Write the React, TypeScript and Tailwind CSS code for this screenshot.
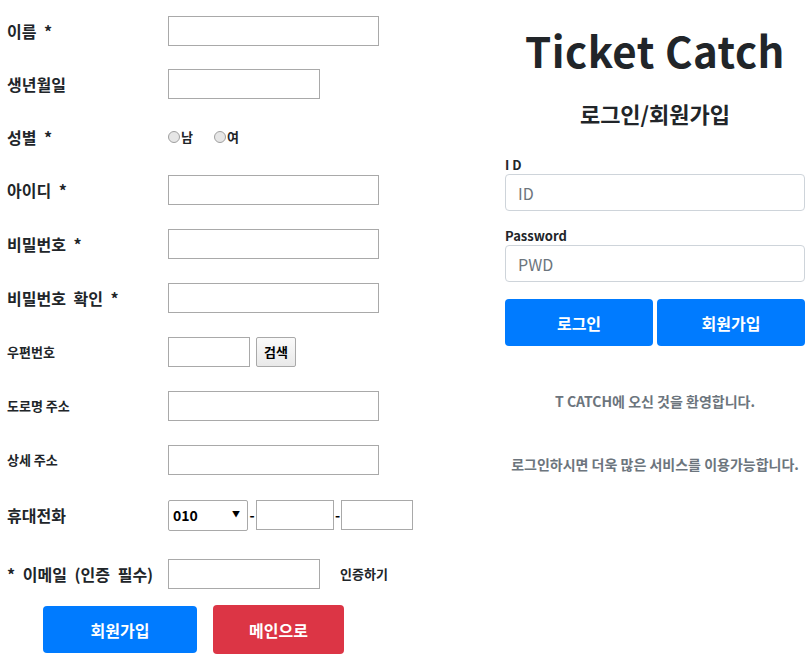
import { useState } from "react";

const font = { fontFamily: '"Noto Sans CJK KR", "Noto Sans", sans-serif' };

type RowProps = {
  label: string;
  h: string;
  small?: boolean;
  children?: React.ReactNode;
};

function Row({ label, h, small, children }: RowProps) {
  return (
    <div className={`flex items-center ${h}`}>
      <div
        className={`w-[168px] shrink-0 pl-[7px] font-bold text-[#212529] ${
          small ? "text-[13px]" : "text-[16px] [word-spacing:4px]"
        }`}
      >
        {label}
      </div>
      {children}
    </div>
  );
}

const boxInput = "h-[30px] border border-[#a9a9a9] bg-white px-1 text-[14px] outline-none";

function Radio({ label, name, value, checked, onChange }: { label: string; name: string; value: string; checked: boolean; onChange: (v: string) => void }) {
  return (
    <label className="flex items-center text-[13px] font-bold text-[#212529]">
      <input
        type="radio"
        name={name}
        value={value}
        checked={checked}
        onChange={() => onChange(value)}
        className="mr-[1px] h-[12px] w-[12px] appearance-none rounded-full border border-[#a0a0a0] bg-[#e6e6e6] checked:bg-[#007bff]"
      />
      {label}
    </label>
  );
}

export default function App() {
  const [gender, setGender] = useState("");
  const [phone1, setPhone1] = useState("010");

  return (
    <div className="flex h-[657px] w-[810px] bg-white" style={font}>
      {/* sign up form */}
      <div className="w-[505px] shrink-0 pt-[4px]">
        <Row label="이름 *" h="h-[54px]">
          <input className={`${boxInput} w-[211px]`} />
        </Row>
        <Row label="생년월일" h="h-[52px]">
          <input className={`${boxInput} w-[152px]`} />
        </Row>
        <Row label="성별 *" h="h-[53px]">
          <div className="flex gap-[21px]">
            <Radio label="남" name="gender" value="m" checked={gender === "m"} onChange={setGender} />
            <Radio label="여" name="gender" value="f" checked={gender === "f"} onChange={setGender} />
          </div>
        </Row>
        <Row label="아이디 *" h="h-[54px]">
          <input className={`${boxInput} w-[211px]`} />
        </Row>
        <Row label="비밀번호 *" h="h-[53px]">
          <input type="password" className={`${boxInput} w-[211px]`} />
        </Row>
        <Row label="비밀번호 확인 *" h="h-[55px]">
          <input type="password" className={`${boxInput} w-[211px]`} />
        </Row>
        <Row label="우편번호" h="h-[54px]" small>
          <input className={`${boxInput} w-[82px]`} />
          <button className="ml-[6px] h-[30px] w-[40px] rounded-[2px] border border-[#a9a9a9] bg-gradient-to-b from-[#fafafa] to-[#e9e9e9] text-[13px] font-bold text-black">
            검색
          </button>
        </Row>
        <Row label="도로명 주소" h="h-[54px]" small>
          <input className={`${boxInput} w-[211px]`} />
        </Row>
        <Row label="상세 주소" h="h-[54px]" small>
          <input className={`${boxInput} w-[211px]`} />
        </Row>
        <Row label="휴대전화" h="h-[56px]">
          <div className="flex items-center">
            <div className="relative">
              <select
                value={phone1}
                onChange={(e) => setPhone1(e.target.value)}
                className="h-[31px] w-[80px] appearance-none rounded-[2px] border border-[#a9a9a9] bg-white pl-[4px] text-[14px] font-bold text-black outline-none"
              >
                <option>010</option>
                <option>011</option>
                <option>016</option>
                <option>017</option>
                <option>019</option>
              </select>
              <span className="pointer-events-none absolute right-[8px] top-[9px] text-[8px] leading-[10px] text-black">▼</span>
            </div>
            <span className="w-[8px] text-center text-[14px] font-bold">-</span>
            <input className={`${boxInput} w-[78px]`} />
            <span className="w-[7px] text-center text-[14px] font-bold">-</span>
            <input className={`${boxInput} w-[72px]`} />
          </div>
        </Row>
        <Row label="* 이메일 (인증 필수)" h="h-[62px]">
          <input className={`${boxInput} w-[152px]`} />
          <span className="ml-[20px] text-[13px] font-bold text-[#212529]">인증하기</span>
        </Row>
        <div className="flex items-center gap-[16px] pl-[43px]">
          <button className="h-[47px] w-[154px] rounded-[4px] bg-[#007bff] text-[16px] font-bold text-white">
            회원가입
          </button>
          <button className="h-[49px] w-[131px] rounded-[4px] bg-[#dc3545] text-[16px] font-bold text-white">
            메인으로
          </button>
        </div>
      </div>

      {/* login panel */}
      <div className="flex w-[300px] shrink-0 flex-col">
        <h1 className="mt-[22px] text-center text-[42px] font-bold leading-[56px] tracking-[0.5px] text-[#212529]">
          Ticket Catch
        </h1>
        <h2 className="mt-[20px] text-center text-[22px] font-bold leading-[30px] text-[#212529]">
          로그인/회원가입
        </h2>
        <label className="mt-[28px] text-[13px] font-bold leading-[18px] text-[#212529]">I D</label>
        <input
          placeholder="ID"
          className="h-[37px] w-full rounded-[4px] border border-[#ced4da] px-[12px] text-[16px] text-[#495057] outline-none placeholder:text-[#6c757d]"
        />
        <label className="mt-[16px] text-[13px] font-bold leading-[18px] text-[#212529]">Password</label>
        <input
          type="password"
          placeholder="PWD"
          className="h-[37px] w-full rounded-[4px] border border-[#ced4da] px-[12px] text-[16px] text-[#495057] outline-none placeholder:text-[#6c757d]"
        />
        <div className="mt-[17px] flex gap-[4px]">
          <button className="h-[47px] flex-1 rounded-[4px] bg-[#007bff] text-[16px] font-bold text-white">로그인</button>
          <button className="h-[47px] flex-1 rounded-[4px] bg-[#007bff] text-[16px] font-bold text-white">회원가입</button>
        </div>
        <p className="mt-[45px] text-center text-[14px] font-bold text-[#6c757d]">T CATCH에 오신 것을 환영합니다.</p>
        <p className="mt-[42px] text-center text-[14px] font-bold text-[#6c757d]">
          로그인하시면 더욱 많은 서비스를 이용가능합니다.
        </p>
      </div>
    </div>
  );
}
